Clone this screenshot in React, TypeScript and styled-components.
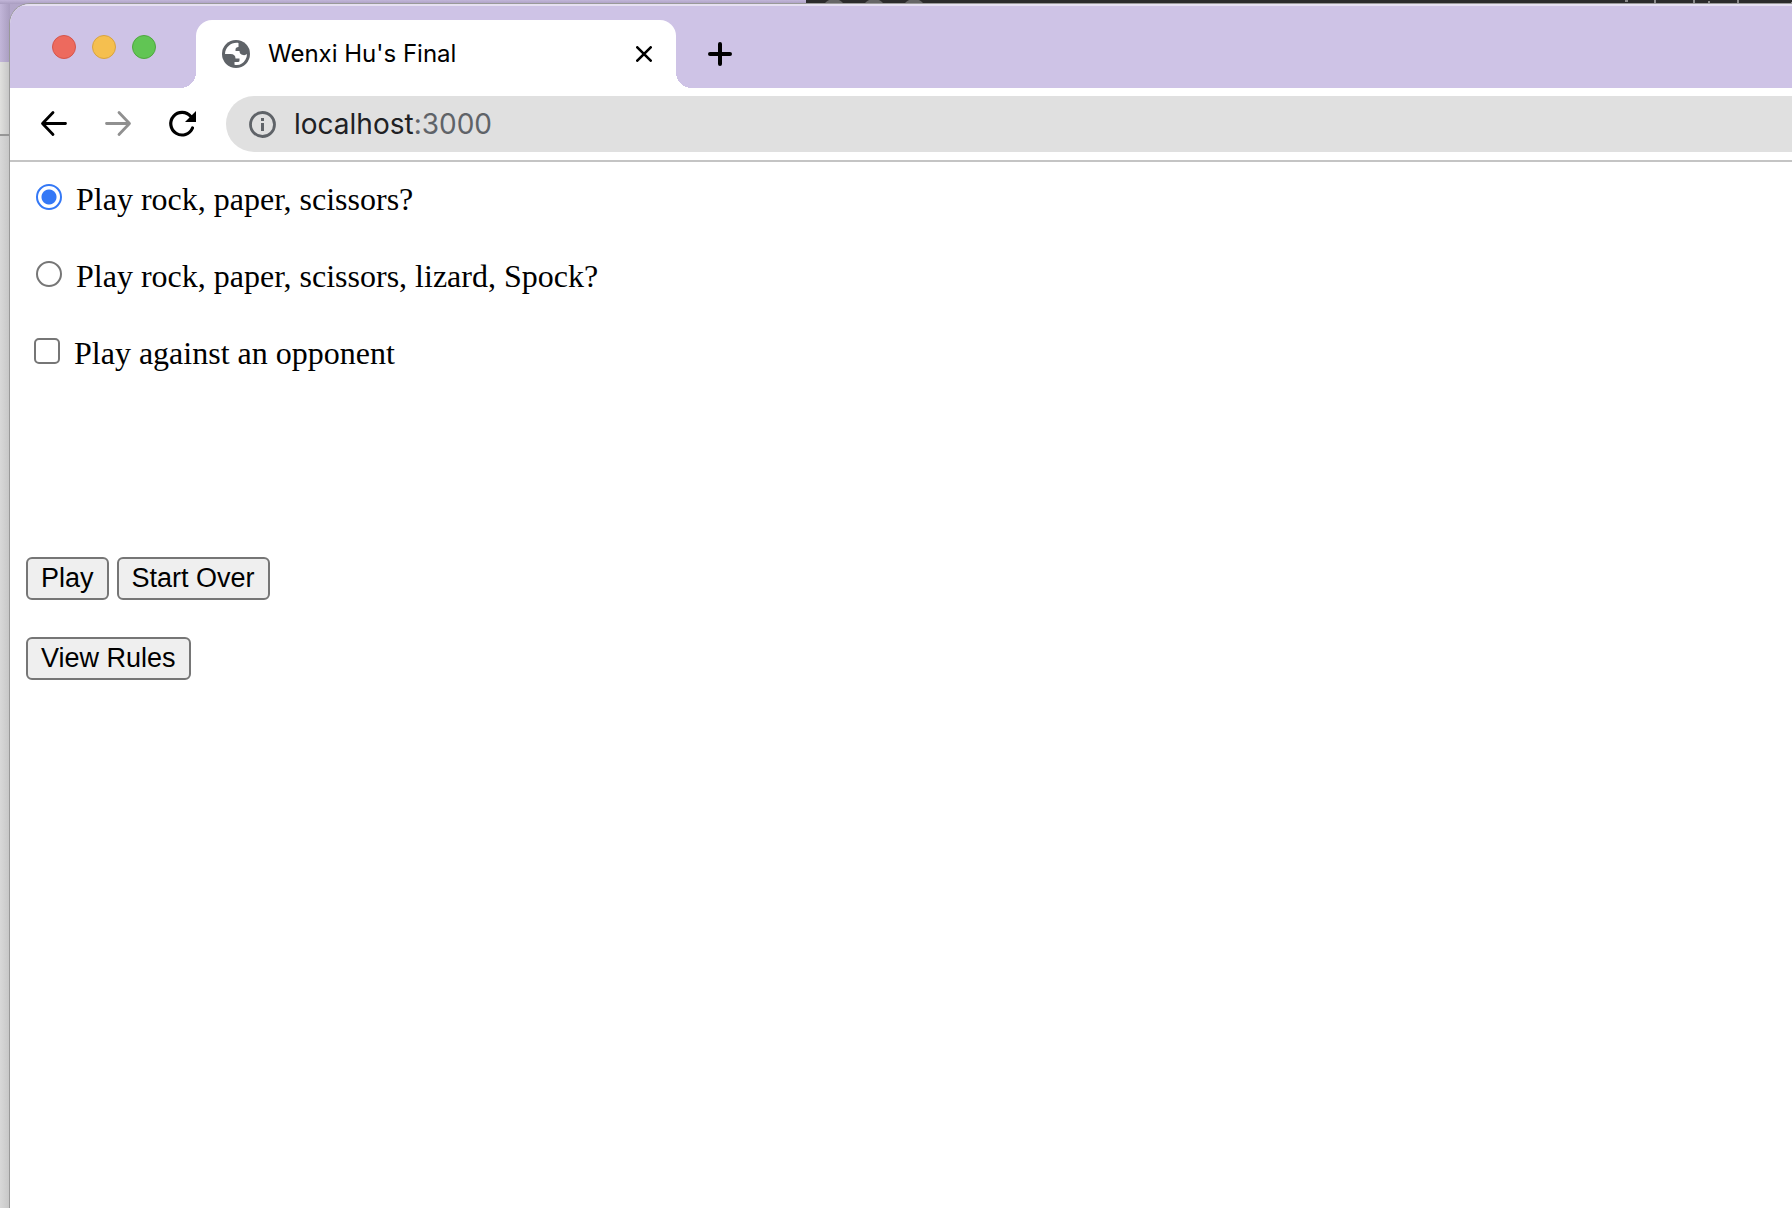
import React, { useState } from "react";
import styled, { createGlobalStyle } from "styled-components";

const GlobalStyle = createGlobalStyle`
  * { box-sizing: border-box; }
  body { margin: 0; background: #fff; }
`;

const Desktop = styled.div`
  display: flex;
  flex-direction: column;
  min-height: 100vh;
  overflow: hidden;
  background: linear-gradient(90deg, #b3a7ca, #a99dc0);
`;

const BackWindows = styled.div`
  flex: none;
  display: flex;
  height: 4px;
  overflow: hidden;
`;

const BackTabStrip = styled.div`
  flex: 0 0 45%;
  background: linear-gradient(#c2b6d9, #a99dc0);
`;

const BackEditor = styled.div`
  flex: 1;
  display: flex;
  justify-content: space-between;
  overflow: hidden;
  background: #2b2b2b;
`;

const Workspace = styled.div`
  flex: 1;
  display: flex;
`;

const BackEdge = styled.div`
  flex: 0 0 10px;
  display: flex;
  flex-direction: column;
`;

const BackEdgeTabs = styled.div`
  height: 58px;
  background: linear-gradient(90deg, #c2b6d9, #a99dc0);
`;

const BackEdgeToolbar = styled.div`
  height: 74px;
  background: linear-gradient(90deg, #e0e0de, #c4c4c4);
  border-bottom: 2px solid #969696;
`;

const BackEdgePage = styled.div`
  flex: 1;
  background: linear-gradient(90deg, #d8d8d8, #c6c6c6);
`;

const BrowserWindow = styled.div`
  flex: 1;
  min-width: 0;
  display: flex;
  flex-direction: column;
  background: #fff;
  border-top-left-radius: 20px;
  overflow: hidden;
  box-shadow: 0 0 0 1px #999;
`;

const TabStrip = styled.header`
  display: flex;
  align-items: flex-end;
  height: 84px;
  background: #cec3e6;
  border-top: 2px solid #e6e0f2;
`;

const TrafficLights = styled.div`
  align-self: flex-start;
  display: flex;
  gap: 16px;
  padding: 29px 40px 0 42px;
`;

const Light = styled.button<{ $fill: string; $edge: string }>`
  width: 24px;
  height: 24px;
  padding: 0;
  border-radius: 50%;
  border: 1px solid ${(p) => p.$edge};
  background: ${(p) => p.$fill};
`;

const Tab = styled.div`
  position: relative;
  display: flex;
  align-items: center;
  width: 480px;
  height: 68px;
  padding: 0 24px 0 26px;
  background: #fff;
  border-radius: 16px 16px 0 0;

  &::before,
  &::after {
    content: "";
    position: absolute;
    bottom: 0;
    width: 16px;
    height: 16px;
  }
  &::before {
    right: 100%;
    background: radial-gradient(circle at 0 0, transparent 16px, #fff 16px);
  }
  &::after {
    left: 100%;
    background: radial-gradient(circle at 100% 0, transparent 16px, #fff 16px);
  }
`;

const TabTitle = styled.span`
  flex: 1;
  margin-left: 18px;
  font: 24px/28px Inter, "Liberation Sans", sans-serif;
  color: #000;
`;

const IconButton = styled.button`
  display: flex;
  padding: 0;
  border: 0;
  background: none;
  color: #000;

  &:disabled { color: #909090; }
`;

const NewTab = styled(IconButton)`
  align-self: center;
  margin: 14px 0 0 32px;
`;

const Toolbar = styled.nav`
  display: flex;
  align-items: center;
  height: 74px;
  padding-left: 30px;
  background: #fff;
  border-bottom: 2px solid #c4c4c4;
`;

const NavButtons = styled.div`
  display: flex;
  gap: 36px;
  margin-right: 30px;
`;

const AddressBar = styled.div`
  flex: 1;
  display: flex;
  align-items: center;
  gap: 18px;
  height: 56px;
  padding-left: 22px;
  background: #e0e0e0;
  border-radius: 28px 0 0 28px;
`;

const Address = styled.a`
  font: 28px/34px Inter, "Liberation Sans", sans-serif;
  color: #202124;
  text-decoration: none;
`;

const Port = styled.span`
  color: #5f6368;
`;

const Page = styled.main`
  flex: 1;
  padding: 20px 16px;
`;

const Options = styled.form`
  display: flex;
  flex-direction: column;
  gap: 42px;
  margin-bottom: 186px;
`;

const Option = styled.label`
  display: flex;
  align-items: flex-start;
  font: 32px/35px "Liberation Serif", "Times New Roman", serif;
  color: #000;
`;

const Radio = styled.input`
  appearance: none;
  width: 26px;
  height: 26px;
  margin: 2px 14px 0 10px;
  border: 2px solid #767676;
  border-radius: 50%;
  background: #fff;

  &:checked {
    border-color: #3478f6;
    background: radial-gradient(circle, #3478f6 7px, #fff 8px);
  }
`;

const Checkbox = styled.input`
  appearance: none;
  width: 26px;
  height: 26px;
  margin: 2px 14px 0 8px;
  border: 2px solid #767676;
  border-radius: 5px;
  background: #fff;

  &:checked { background: #3478f6; }
`;

const Actions = styled.div`
  display: flex;
  gap: 8px;
  margin-bottom: 37px;
`;

const Action = styled.button`
  height: 43px;
  padding: 0 13px 2px;
  border: 2px solid #767676;
  border-radius: 6px;
  background: #efefef;
  color: #000;
  font: 27px/30px "Liberation Sans", Arial, sans-serif;
`;

const Globe = () => (
  <svg width="28" height="28" viewBox="0 0 28 28" aria-hidden="true">
    <circle cx="14" cy="14" r="14" fill="#5f6368" />
    <path
      d="M16.500 3C9.500 2 3.300 7 3 14H8.500Q13.500 14 13.500 18.500H17.500V20.500Q17.500 22 16 22H12.500V24.800Q20 26 23.500 19.500Q25 17 25 14Q23.500 15.500 21 15Q17.500 14.500 17.500 11H13.500V9.500Q13.500 7 16.500 7Z"
      fill="#fff"
    />
  </svg>
);

const options = ["Play rock, paper, scissors?", "Play rock, paper, scissors, lizard, Spock?"];

export default function App() {
  const [game, setGame] = useState(0);
  const [opponent, setOpponent] = useState(false);

  return (
    <Desktop>
      <GlobalStyle />
      <BackWindows>
        <BackTabStrip />
        <BackEditor>
          <svg width="130" height="4" aria-hidden="true">
            <g fill="#666">
              <circle cx="28" cy="11" r="12" />
              <circle cx="68" cy="11" r="12" />
              <circle cx="108" cy="11" r="12" />
            </g>
          </svg>
          <svg width="192" height="4" aria-hidden="true">
            <path d="M25 0h3v2h-3zM54 0h2v4h-2zM93 0h2v4h-2zM108 1h2v3h-2zM137 0h2v4h-2zM191 2h1v2h-1z" fill="#8a8a8a" />
          </svg>
        </BackEditor>
      </BackWindows>
      <Workspace>
        <BackEdge>
          <BackEdgeTabs />
          <BackEdgeToolbar />
          <BackEdgePage />
        </BackEdge>
        <BrowserWindow>
          <TabStrip>
            <TrafficLights>
              <Light $fill="#ed6a5e" $edge="#d5554b" aria-label="Close window" />
              <Light $fill="#f5bf4f" $edge="#d8a340" aria-label="Minimize window" />
              <Light $fill="#61c554" $edge="#4fa73f" aria-label="Zoom window" />
            </TrafficLights>
            <Tab>
              <Globe />
              <TabTitle>Wenxi Hu's Final</TabTitle>
              <IconButton aria-label="Close tab">
                <svg width="16" height="16" viewBox="0 0 16 16" stroke="currentColor" strokeWidth="2.600" strokeLinecap="round">
                  <path d="M1.300 1.300L14.700 14.700M14.700 1.300L1.300 14.700" />
                </svg>
              </IconButton>
            </Tab>
            <NewTab aria-label="New tab">
              <svg width="24" height="24" viewBox="0 0 24 24" stroke="currentColor" strokeWidth="4" strokeLinecap="round">
                <path d="M12 2V22M2 12H22" />
              </svg>
            </NewTab>
          </TabStrip>
          <Toolbar>
            <NavButtons>
              <IconButton aria-label="Back">
                <svg width="28" height="28" viewBox="0 0 28 28" fill="none" stroke="currentColor" strokeWidth="2.800" strokeLinecap="round" strokeLinejoin="round">
                  <path d="M25.500 13.500H3M13 2.500L2.500 13.500L13 24.500" />
                </svg>
              </IconButton>
              <IconButton aria-label="Forward" disabled>
                <svg width="28" height="28" viewBox="0 0 28 28" fill="none" stroke="currentColor" strokeWidth="2.800" strokeLinecap="round" strokeLinejoin="round">
                  <path d="M2.500 13.500H25M15 2.500L25.500 13.500L15 24.500" />
                </svg>
              </IconButton>
              <IconButton aria-label="Reload">
                <svg width="28" height="28" viewBox="0 0 28 28" fill="none" stroke="currentColor" strokeWidth="3.200" strokeLinecap="round">
                  <path d="M24.500 18A11.300 11.300 0 1 1 22.800 6.500" />
                  <path d="M28 1V12H17Z" fill="currentColor" stroke="none" />
                </svg>
              </IconButton>
            </NavButtons>
            <AddressBar>
              <svg width="28" height="28" viewBox="0 0 28 28" aria-hidden="true">
                <circle cx="14.500" cy="14.500" r="12" fill="none" stroke="#5f6368" strokeWidth="2.800" />
                <path d="M13 8h3v3h-3zM13 13h3v8h-3z" fill="#5f6368" />
              </svg>
              <Address href="#">
                localhost<Port>:3000</Port>
              </Address>
            </AddressBar>
          </Toolbar>
          <Page>
            <Options>
              {options.map((text, i) => (
                <Option key={text}>
                  <Radio type="radio" name="game" checked={game === i} onChange={() => setGame(i)} />
                  {text}
                </Option>
              ))}
              <Option>
                <Checkbox type="checkbox" checked={opponent} onChange={() => setOpponent(!opponent)} />
                Play against an opponent
              </Option>
            </Options>
            <Actions>
              <Action>Play</Action>
              <Action>Start Over</Action>
            </Actions>
            <Actions>
              <Action>View Rules</Action>
            </Actions>
          </Page>
        </BrowserWindow>
      </Workspace>
    </Desktop>
  );
}
